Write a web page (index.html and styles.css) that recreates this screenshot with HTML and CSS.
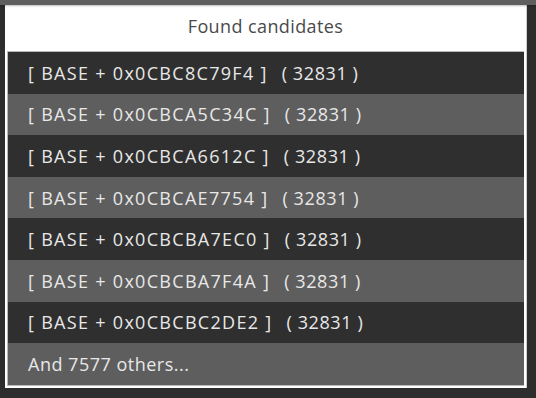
FILE: index.html
```html
<!DOCTYPE html>
<html>
<head>
<meta charset="utf-8">
<link rel="stylesheet" href="styles.css">
</head>
<body>
<div class="topbar"></div>
<div class="panel">
  <div class="title">Found candidates</div>
  <div class="list">
    <div class="row dark">[ BASE + 0x0CBC8C79F4 ]<span class="count">( 32831 )</span></div>
    <div class="row light">[ BASE + 0x0CBCA5C34C ]<span class="count">( 32831 )</span></div>
    <div class="row dark">[ BASE + 0x0CBCA6612C ]<span class="count">( 32831 )</span></div>
    <div class="row light">[ BASE + 0x0CBCAE7754 ]<span class="count">( 32831 )</span></div>
    <div class="row dark">[ BASE + 0x0CBCBA7EC0 ]<span class="count">( 32831 )</span></div>
    <div class="row light">[ BASE + 0x0CBCBA7F4A ]<span class="count">( 32831 )</span></div>
    <div class="row dark">[ BASE + 0x0CBCBC2DE2 ]<span class="count">( 32831 )</span></div>
    <div class="row light more">And 7577 others...</div>
  </div>
</div>
</body>
</html>
```
FILE: styles.css
```css
html, body {
  margin: 0;
  padding: 0;
  background: #2d2d2d;
  width: 536px;
  height: 398px;
  overflow: hidden;
  font-family: "Open Sans", "Noto Sans", sans-serif;
}
.topbar {
  height: 5px;
  background: #5f5f5f;
  box-shadow: 0 1px 2px rgba(0,0,0,0.25);
  position: relative;
  z-index: 1;
}
.panel {
  margin-left: 5px;
  width: 522px;
  height: 383px;
  background: #ffffff;
  box-sizing: border-box;
  padding: 0 2px 2px 2px;
  display: flex;
  flex-direction: column;
  border-right: 1px solid #cfcfcf;
}
.title {
  height: 46px;
  display: flex;
  align-items: center;
  justify-content: center;
  color: #4a4a4a;
  font-size: 18px;
  letter-spacing: 0.4px;
  padding-bottom: 4px;
  box-sizing: border-box;
}
.list {
  border: 1px solid #b8b8b8;
  border-right: none;
  display: flex;
  flex-direction: column;
  flex: 1;
}
.row {
  height: 41.6px;
  display: flex;
  align-items: center;
  padding-left: 20px;
  color: #e8e8e8;
  font-size: 18px;
  letter-spacing: 1.3px;
  box-sizing: border-box;
  white-space: pre;
}
.count {
  margin-left: 14px;
  letter-spacing: 0.6px;
}
.more {
  letter-spacing: 0.5px;
}
.dark { background: #2f2f2f; }
.light { background: #5e5e5e; }
```
